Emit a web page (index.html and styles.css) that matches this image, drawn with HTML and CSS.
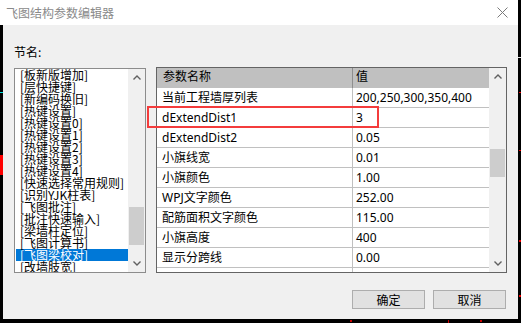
FILE: index.html
```html
<!DOCTYPE html>
<html lang="zh">
<head>
<meta charset="utf-8">
<title>飞图结构参数编辑器</title>
<link rel="stylesheet" href="styles.css">
</head>
<body>
<div class="screen">
  <div class="window">
    <div class="titlebar">
      <span class="title">飞图结构参数编辑器</span>
      <svg class="close" width="11" height="11" viewBox="0 0 11 11"><path d="M0.5 0.5 L10.5 10.5 M10.5 0.5 L0.5 10.5" stroke="#7a7a7a" stroke-width="1" fill="none"/></svg>
    </div>
    <div class="client">
      <div class="main">
        <div class="leftcol">
          <div class="label">节名:</div>
          <div class="listbox">
            <ul class="list">
              <li>[板新版增加]</li>
              <li>[层快捷键]</li>
              <li>[新编码换旧]</li>
              <li>[热键设置]</li>
              <li>[热键设置0]</li>
              <li>[热键设置1]</li>
              <li>[热键设置2]</li>
              <li>[热键设置3]</li>
              <li>[热键设置4]</li>
              <li>[快速选择常用规则]</li>
              <li>[识别YJK柱表]</li>
              <li>[飞图批注]</li>
              <li>[批注快速输入]</li>
              <li>[梁墙柱定位]</li>
              <li>[飞图计算书]</li>
              <li class="sel">[飞图梁校对]</li>
              <li>[改墙肢宽]</li>
            </ul>
            <div class="vscroll">
              <div class="arrow"><svg width="8" height="5" viewBox="0 0 8 5"><path d="M0.5 4.5 L4 1 L7.5 4.5" stroke="#606060" stroke-width="1.4" fill="none"/></svg></div>
              <div class="track"><div class="thumb list-thumb"></div></div>
              <div class="arrow"><svg width="8" height="5" viewBox="0 0 8 5"><path d="M0.5 0.5 L4 4 L7.5 0.5" stroke="#606060" stroke-width="1.4" fill="none"/></svg></div>
            </div>
          </div>
        </div>
        <div class="grid">
          <div class="gridbody">
            <div class="row head"><div class="c1">参数名称</div><div class="c2">值</div></div>
            <div class="row"><div class="c1">当前工程墙厚列表</div><div class="c2">200,250,300,350,400</div></div>
            <div class="row"><div class="c1">dExtendDist1</div><div class="c2">3</div></div>
            <div class="row"><div class="c1">dExtendDist2</div><div class="c2">0.05</div></div>
            <div class="row"><div class="c1">小旗线宽</div><div class="c2">0.01</div></div>
            <div class="row"><div class="c1">小旗颜色</div><div class="c2">1.00</div></div>
            <div class="row"><div class="c1">WPJ文字颜色</div><div class="c2">252.00</div></div>
            <div class="row"><div class="c1">配筋面积文字颜色</div><div class="c2">115.00</div></div>
            <div class="row"><div class="c1">小旗高度</div><div class="c2">400</div></div>
            <div class="row"><div class="c1">显示分跨线</div><div class="c2">0.00</div></div>
            <div class="row"><div class="c1">&nbsp;</div><div class="c2">&nbsp;</div></div>
          </div>
          <div class="vscroll">
            <div class="arrow"><svg width="8" height="5" viewBox="0 0 8 5"><path d="M0.5 4.5 L4 1 L7.5 4.5" stroke="#606060" stroke-width="1.4" fill="none"/></svg></div>
            <div class="track"><div class="thumb grid-thumb"></div></div>
            <div class="arrow"><svg width="8" height="5" viewBox="0 0 8 5"><path d="M0.5 0.5 L4 4 L7.5 0.5" stroke="#606060" stroke-width="1.4" fill="none"/></svg></div>
          </div>
        </div>
      </div>
      <div class="buttons">
        <button class="btn">确定</button>
        <button class="btn">取消</button>
      </div>
    </div>
  </div>
  <div class="highlight"></div>
  <div class="cad cyan-l"></div>
  <div class="cad red-l"></div>
  <div class="cad white-r"></div>
  <div class="cad red-r1"></div>
  <div class="cad red-r2"></div>
  <div class="cad red-r3"></div>
  <div class="cad red-r4"></div>
  <div class="cad red-b1"></div>
  <div class="cad red-b2"></div>
  <div class="cad red-b3"></div>
</div>
</body>
</html>
```

FILE: styles.css
```css
* { box-sizing: border-box; }
html, body { margin: 0; padding: 0; background: #000; }
body { font-family: "Noto Sans", "Noto Sans CJK SC", sans-serif; font-size: 12px; color: #000; }

.screen { position: relative; width: 521px; height: 323px; overflow: hidden; background: #000; }

.window { width: 518px; height: 319px; display: flex; flex-direction: column; }

.titlebar {
  height: 25px; background: #fff; display: flex; align-items: center;
  padding-left: 6px; flex: none;
}
.title { font-family: "Noto Sans CJK SC", sans-serif; font-size: 12px; color: #8a8a8a; line-height: 14px; }
.close { margin-left: auto; margin-right: 10px; display: block; }

.client {
  flex: 1; margin-left: 3px; background: #f0f0f0;
  padding: 20px 11px 0 11px;
  display: flex; flex-direction: column;
}

.main { display: flex; align-items: flex-start; }

.leftcol { display: flex; flex-direction: column; width: 132px; }
.label { font-family: "Noto Sans CJK SC", sans-serif; height: 14px; line-height: 14px; margin-bottom: 9px; }

.listbox {
  width: 132px; height: 205px; border: 1px solid #8c8c8c; background: #fff;
  display: flex;
}
.list {
  list-style: none; margin: 0; padding: 0; flex: 1; overflow: hidden;
  font-family: "Noto Sans CJK SC", sans-serif;
}
.list li { height: 12px; line-height: 12px; margin-left: 1px; padding-left: 4px; white-space: nowrap; font-size: 12px; }
.list li.sel { background: #0078d7; color: #fff; }

.vscroll { width: 17px; background: #f0f0f0; display: flex; flex-direction: column; flex: none; }
.arrow { height: 17px; display: flex; align-items: center; justify-content: center; flex: none; }
.arrow svg { display: block; }
.track { flex: 1; }
.thumb { background: #cdcdcd; margin: 0 1px; }
.list-thumb { margin-top: 121px; height: 38px; }
.grid-thumb { margin-top: 64px; height: 28px; }

.grid {
  margin-left: 10px; margin-top: 22px;
  width: 351px; height: 206px; border: 1px solid #646464; background: #fff;
  display: flex;
}
.gridbody { flex: 1; overflow: hidden; }
.row { display: flex; height: 20px; border-bottom: 1px solid #c0c0c0; line-height: 19px; white-space: nowrap; }
.row .c1 { width: 196px; border-right: 1px solid #c0c0c0; padding-left: 5px; }
.row .c2 { flex: 1; padding-left: 3px; }
.row.head { background: #c0c0c0; border-bottom: none; line-height: 18px; }
.row.head .c1 { border-right-color: #8e8e8e; padding-left: 6px; }

.buttons { display: flex; justify-content: flex-end; gap: 8px; margin-top: 17px; padding-right: 1px; }
.btn {
  width: 73px; height: 19px; background: #e1e1e1; border: 1px solid #adadad;
  font-family: "Noto Sans CJK SC", sans-serif; font-size: 12px; color: #000;
  padding: 0; line-height: 16px; margin: 0;
}

.highlight {
  position: absolute; left: 147px; top: 106px; width: 232px; height: 22px;
  border: 2px solid #f43c3c;
}

.cad { position: absolute; }
.cyan-l { left: 0; top: 92px; width: 3px; height: 1px; background: #00e0e0; }
.red-l { left: 0; top: 155px; width: 3px; height: 20px; background: #ff0000; }
.white-r { left: 518px; top: 57px; width: 3px; height: 1px; background: #ddd; }
.red-r1 { left: 519px; top: 92px; width: 2px; height: 1px; background: #e00; }
.red-r2 { left: 519px; top: 150px; width: 2px; height: 1px; background: #e00; }
.red-r3 { left: 519px; top: 240px; width: 2px; height: 2px; background: #e00; }
.red-r4 { left: 519px; top: 295px; width: 2px; height: 2px; background: #e00; }
.red-b1 { left: 350px; top: 320px; width: 2px; height: 2px; background: #c00; }
.red-b2 { left: 448px; top: 320px; width: 1px; height: 3px; background: #c00; }
.red-b3 { left: 480px; top: 320px; width: 2px; height: 2px; background: #c00; }
```
